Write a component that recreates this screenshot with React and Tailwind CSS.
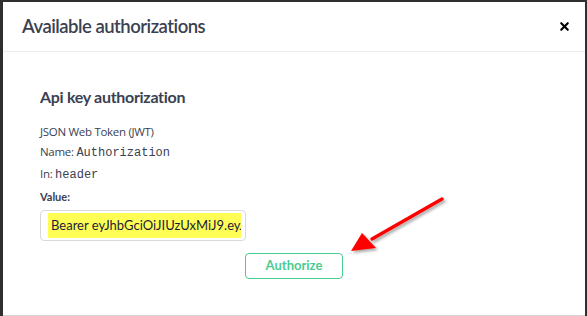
import { X } from "lucide-react";

const heading = { fontFamily: "Lato, 'Open Sans', sans-serif" };

const App = () => {
    return (
        <div className="relative h-[316px] w-[587px] overflow-hidden bg-[#2f2f2f] pl-[3px] pr-[2px] pt-[2px]">
            <div className="flex h-[314px] flex-col border-b border-[#d6d6d6] bg-white">
                {/* Modal header */}
                <div className="flex h-[50px] shrink-0 items-center justify-between border-b border-[#ebebeb] pl-[19px] pr-[11px]">
                    <h4 className="pt-[1px] text-[18.5px] font-semibold tracking-[-0.5px] text-[#3b4151]" style={heading}>
                        Available authorizations
                    </h4>
                    <button className="flex h-5 w-5 items-center justify-center text-black">
                        <X size={13} strokeWidth={4} />
                    </button>
                </div>

                {/* Modal body */}
                <div className="px-[37px] pt-[34px] font-['Open_Sans',sans-serif] text-[#3b4151]">
                    <h4 className="text-[16px] font-bold leading-[22px] tracking-[-0.3px]" style={heading}>Api key authorization</h4>
                    <div className="mt-[16px] flex flex-col gap-[5px] text-[11.5px] leading-[15px] tracking-[-0.3px]">
                        <p>JSON Web Token (JWT)</p>
                        <p>Name: <code className="font-['Liberation_Mono',monospace] text-[12px] tracking-normal">Authorization</code></p>
                        <p>In: <code className="font-['Liberation_Mono',monospace] text-[12px] tracking-normal">header</code></p>
                    </div>
                    <label className="mt-[6px] block text-[11px] font-bold" style={heading}>Value:</label>
                    <div className="mt-[4px] flex h-[31px] w-[206px] items-center overflow-hidden rounded border border-[#d9d9d9] pl-[7px] pr-[4px]">
                        <span className="block h-[25px] w-full overflow-hidden whitespace-nowrap bg-[#ffff55] pl-[3px] text-[13px] leading-[25px] text-[#1b1b3a]" style={heading}>
                            Bearer eyJhbGciOiJIUzUxMiJ9.eyJzdWIiOiJhZG1pbiJ9
                        </span>
                    </div>
                    <div className="mt-[12px] flex justify-center">
                        <button className="h-[26px] w-[98px] rounded border border-[#49cc90] text-[13px] font-bold text-[#49cc90]" style={heading}>
                            Authorize
                        </button>
                    </div>
                </div>
            </div>

            {/* Red annotation arrow */}
            <svg className="pointer-events-none absolute left-0 top-0" width="587" height="316">
                <defs>
                    <filter id="sh" x="-20%" y="-20%" width="140%" height="140%">
                        <feDropShadow dx="2" dy="2" stdDeviation="1.5" floodColor="#000" floodOpacity="0.35" />
                    </filter>
                </defs>
                <g filter="url(#sh)">
                    <line x1="442" y1="199" x2="372" y2="239" stroke="#ff0000" strokeWidth="3.5" strokeLinecap="round" />
                    <polygon points="351,251 362,233 376,248" fill="#ff0000" />
                </g>
            </svg>
        </div>
    );
};

export default App;
